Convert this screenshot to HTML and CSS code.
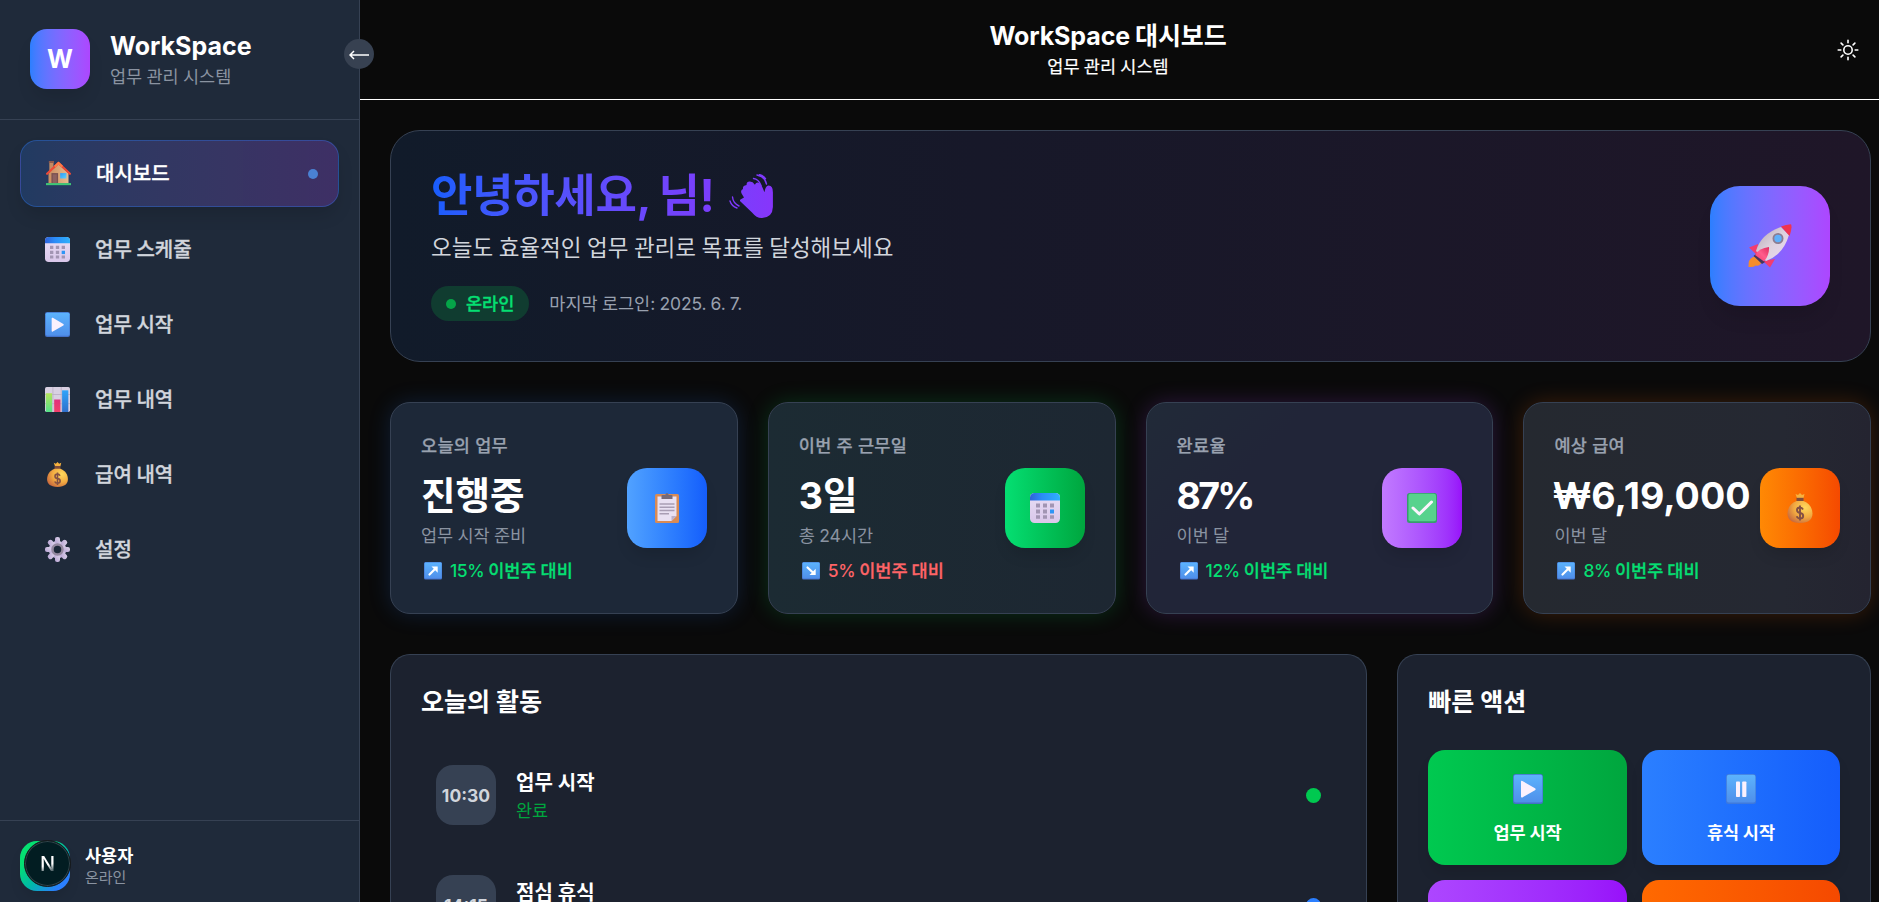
FILE: index.html
```html
<!DOCTYPE html>
<html lang="ko">
<head>
<meta charset="utf-8">
<title>WorkSpace 대시보드</title>
<link rel="stylesheet" href="styles.css">
</head>
<body>
<svg class="sprite" width="0" height="0" aria-hidden="true">
  <defs>
    <linearGradient id="gBlue" x1="0" y1="0" x2="0" y2="1"><stop offset="0" stop-color="#5cb3fd"/><stop offset="1" stop-color="#4f8fea"/></linearGradient>
    <linearGradient id="gCalTop" x1="0" y1="0" x2="1" y2="0"><stop offset="0" stop-color="#2e62d9"/><stop offset=".4" stop-color="#2b8cf8"/><stop offset="1" stop-color="#2fb0fb"/></linearGradient>
    <linearGradient id="gPaper" x1="0" y1="0" x2="0" y2="1"><stop offset="0" stop-color="#e9def5"/><stop offset="1" stop-color="#d9c7ea"/></linearGradient>
    <radialGradient id="gBag" cx=".7" cy=".3" r=".8"><stop offset="0" stop-color="#ffd95c"/><stop offset=".55" stop-color="#f2aa41"/><stop offset="1" stop-color="#c96a3e"/></radialGradient>
    <linearGradient id="gWall" x1="0" y1="0" x2="1" y2="0"><stop offset="0" stop-color="#c98d60"/><stop offset="1" stop-color="#e9bb8e"/></linearGradient>
    <linearGradient id="gWin" x1="0" y1="0" x2="1" y2="1"><stop offset="0" stop-color="#2f9bf7"/><stop offset="1" stop-color="#5cd0ff"/></linearGradient>
    <linearGradient id="gBarG" x1="0" y1="0" x2="0" y2="1"><stop offset="0" stop-color="#b4e45a"/><stop offset="1" stop-color="#55e08a"/></linearGradient>
    <linearGradient id="gBarR" x1="0" y1="0" x2="0" y2="1"><stop offset="0" stop-color="#e0307e"/><stop offset="1" stop-color="#f23f68"/></linearGradient>
    <linearGradient id="gBarB" x1="0" y1="0" x2="0" y2="1"><stop offset="0" stop-color="#31a4fa"/><stop offset="1" stop-color="#2f6fcb"/></linearGradient>
    <linearGradient id="gGear" x1="1" y1="0" x2="0" y2="1"><stop offset="0" stop-color="#ddd3ea"/><stop offset="1" stop-color="#b7a3d3"/></linearGradient>
    <linearGradient id="gHull" x1="0" y1="0" x2="1" y2="1"><stop offset="0" stop-color="#b5a6b0"/><stop offset=".5" stop-color="#ddd2de"/><stop offset="1" stop-color="#ecd9f4"/></linearGradient>
    <linearGradient id="gFin" x1="0" y1="1" x2="1" y2="0"><stop offset="0" stop-color="#f5386a"/><stop offset=".5" stop-color="#ff5d8c"/><stop offset="1" stop-color="#e02a5c"/></linearGradient>
    <linearGradient id="gWave" x1="0" y1="0" x2="1" y2="0"><stop offset="0" stop-color="#7b3dfc"/><stop offset="1" stop-color="#8735fb"/></linearGradient>
  </defs>
  <symbol id="home" viewBox="0 0 30 30">
    <path d="M4 2h5v12H4z" fill="#c48a62"/><path d="M3.400 0h6.200v2.400H3.400z" fill="#8d5a4e"/>
    <path d="M3 15 15 4l12 11v12H3z" fill="url(#gWall)"/>
    <path d="M1.300 15.300 15 2.500 28.700 15.300" fill="none" stroke="#ee4a37" stroke-width="2.600" stroke-linecap="round" stroke-linejoin="round"/>
    <path d="M10.500 6.700 15 2.500l4.500 4.200" fill="none" stroke="#ff7a45" stroke-width="2.600"/>
    <path d="M6.500 14.500h8v12h-8z" fill="#7a5050"/><path d="M8 16h5v10.500H8z" fill="#8d6160"/>
    <path d="M17 14.500h7.500v6.500H17z" fill="url(#gWin)"/><path d="M0 26.500h30V29H0z" fill="#3fc777"/>
  </symbol>
  <symbol id="calendar" viewBox="0 0 30 30">
    <rect width="30" height="30" rx="4.500" fill="url(#gPaper)"/><path d="M0 7.500V4.500A4.500 4.500 0 0 1 4.500 0h21A4.500 4.500 0 0 1 30 4.500v3z" fill="url(#gCalTop)"/>
    <g fill="#a295b3"><path d="M6 10.500h4v4H6zM13 10.500h4v4h-4zM20 10.500h4v4h-4zM6 16.500h4v4H6zM13 16.500h4v4h-4zM6 22.300h4v3.500H6zM13 22.300h4v3.500h-4zM20 22.300h4v3.500h-4z"/></g><path d="M20 16.500h4v4h-4z" fill="#2e95f5"/>
  </symbol>
  <symbol id="play" viewBox="0 0 30 30">
    <rect width="30" height="30" rx="2.500" fill="#4371c8"/><rect x=".8" y=".8" width="28.600" height="27.700" rx="2" fill="url(#gBlue)"/>
    <path d="M8 7.800v14.800q0 1.500 1.400.8L22 16.300q1.300-1 0-2L9.400 7q-1.400-.7-1.400.8z" fill="#fbf1fd"/>
  </symbol>
  <symbol id="pause" viewBox="0 0 30 30">
    <rect width="30" height="30" rx="2.500" fill="#3f79dc"/><rect x=".8" y=".8" width="28.600" height="27.700" rx="2" fill="url(#gBlue)"/>
    <rect x="10" y="7.500" width="4" height="15.500" rx=".8" fill="#fbf1fd"/><rect x="16.200" y="7.500" width="4.200" height="15.500" rx=".8" fill="#fbf1fd"/>
  </symbol>
  <symbol id="chart" viewBox="0 0 30 30">
    <rect width="30" height="30" rx="2" fill="#d9d0e2"/><path d="M9.500 0v30M19.500 0v30M0 9h30M0 20h30" stroke="#b9afc4"/>
    <path d="M1 7.500h7.500V30H1z" fill="url(#gBarG)"/><path d="M11 15h7.500v15H11z" fill="url(#gBarR)"/><path d="M20.500 4H28v26h-7.500z" fill="url(#gBarB)"/>
  </symbol>
  <symbol id="money" viewBox="0 0 30 30">
    <path d="M12 5 10.500 1l2.500 1 2-2 2 2 2.500-1L18.500 5z" fill="#f7b23e"/><path d="M11.500 4.800h7v4h-7z" fill="#7e4c3c"/>
    <path d="M11.500 8h7C24 10 27.500 15 27.500 20.500S24 30 15 30 2.500 26 2.500 20.500 6 10 11.500 8z" fill="url(#gBag)"/>
    <path d="M18 16.500q-1-2-3-2-3 0-3 2.500t3 2.900q3.200.4 3.200 3T15 25.500q-2.500 0-3.300-2.200M15 12.500v15" fill="none" stroke="#845044" stroke-width="1.900"/>
  </symbol>
  <symbol id="gear" viewBox="0 0 30 30">
    <g fill="url(#gGear)"><circle cx="15" cy="15" r="10.500"/><g id="teeth"><rect x="12" y="0" width="6" height="8" rx="2.500"/><rect x="12" y="22" width="6" height="8" rx="2.500"/><rect x="0" y="12" width="8" height="6" rx="2.500"/><rect x="22" y="12" width="8" height="6" rx="2.500"/></g><use href="#teeth" transform="rotate(45 15 15)"/></g>
    <circle cx="15" cy="15" r="6" fill="#1e2939" stroke="#94889f" stroke-width="3"/>
  </symbol>
  <symbol id="clipboard" viewBox="0 0 30 30">
    <rect x="3" y="1" width="24" height="29" rx="1.500" fill="#d98b55"/><path d="M5.500 3.500h19V23l-5 5h-14z" fill="#e9e0f2"/><path d="M24.500 23h-5v5z" fill="#bdb0c9"/>
    <path d="M9.500 6V3q0-1 1-1h2.800q.4-2 1.700-2t1.700 2h2.800q1 0 1 1v3z" fill="#776a79"/>
    <path d="M7.500 11h15M7.500 14.300h15M7.500 17.500h15M7.500 20.800h9.500" stroke="#a99db4" stroke-width="1.400"/>
  </symbol>
  <symbol id="check" viewBox="0 0 30 30">
    <rect width="30" height="30" rx="2.500" fill="#379d6e"/><rect x="1.500" y=".8" width="27.500" height="27.500" rx="2" fill="#57d28d"/>
    <path d="m6 15 6.300 6L24.500 9" fill="none" stroke="#fcf3fd" stroke-width="3" stroke-linecap="round" stroke-linejoin="round"/>
  </symbol>
  <symbol id="up" viewBox="0 0 18 18">
    <rect width="18" height="17.500" rx="1.500" fill="#4674ce"/><rect x=".6" y=".5" width="17" height="16" rx="1" fill="url(#gBlue)"/>
    <path d="M5.500 12.500 12 6" stroke="#fff" stroke-width="2.200" stroke-linecap="round"/><path d="M7.500 4.500h6.200v6.200z" fill="#fff"/>
  </symbol>
  <symbol id="down" viewBox="0 0 18 18">
    <rect width="18" height="17.500" rx="1.500" fill="#4674ce"/><rect x=".6" y=".5" width="17" height="16" rx="1" fill="url(#gBlue)"/>
    <path d="M5.500 5.500 12 11.500" stroke="#fff" stroke-width="2.200" stroke-linecap="round"/><path d="M13.700 6.800V13H7.500z" fill="#fff"/>
  </symbol>
  <symbol id="rocket" viewBox="0 0 44 44">
    <path d="M5 33q3-1 5 1l3 3q1 2-1 3.500-2 2-4.500 1-1.500 2-7 1.500Q0 35 5 33z" fill="#f58d2c"/>
    <path d="M10 20 1 23.500 9 31zM27 35 22 43.500 15 37z" fill="#f23d6f"/>
    <path d="M8 27Q13 10 33 3l8 8Q35 31 18 37z" fill="url(#gHull)"/>
    <path d="m5.500 32 3-2.500L17 38l-3 2z" fill="#45365c"/>
    <path d="M7 31q4-7 14-8 .6 8-5 14.500z" fill="url(#gFin)"/>
    <path d="M33 2.500Q38 .500 43 0.300 44.500 4 41.500 12z" fill="#f0344f"/>
    <circle cx="30" cy="14.500" r="4.600" fill="#5fb0fa" stroke="#8c7d92" stroke-width="1.800"/>
  </symbol>
  <symbol id="wave" viewBox="0 0 44 44">
    <path d="M11.500 25.500 15 23.500 12.600 19.500q-1.500-3.500 1.400-4.600-.6-3.300 3.600-4-.2-3.500 3.300-3.400 3 .1 5 3.200 1.500-3.400 4.500-1.700 2.300 1.600 5 9.300 1-6.200 4-6.700 4.600-.2 4.500 7v14.500Q43.500 44 32.500 44q-5 0-9.500-5.500l-11-10.500q-1.800-1.500-.5-2.500z" fill="url(#gWave)"/>
    <path d="M24.500 4.500q5 .5 7.500 7M28 1q8 1.500 9.500 9M3.500 23q.5 6 6.500 9M1 27q1.500 5 7 7M30.500.600q4 1 6 4" fill="none" stroke="#7f39fb" stroke-width="1.400" stroke-linecap="round"/>
  </symbol>
</svg>

<div class="layout">
  <aside class="sidebar">
    <header class="brand">
      <div class="brand-logo">W</div>
      <div>
        <div class="brand-name">WorkSpace</div>
        <div class="brand-sub">업무 관리 시스템</div>
      </div>
    </header>
    <button class="toggle" aria-label="접기"><svg width="20" height="10" viewBox="0 0 20 10"><path d="M.8 5H20M5 1 1 5l4 4" fill="none" stroke="#fff" stroke-width="1.500"/></svg></button>
    <nav class="nav">
      <a class="nav-item active"><svg><use href="#home"/></svg><span>대시보드</span><i></i></a>
      <a class="nav-item"><svg><use href="#calendar"/></svg><span>업무 스케줄</span></a>
      <a class="nav-item"><svg><use href="#play"/></svg><span>업무 시작</span></a>
      <a class="nav-item"><svg><use href="#chart"/></svg><span>업무 내역</span></a>
      <a class="nav-item"><svg><use href="#money"/></svg><span>급여 내역</span></a>
      <a class="nav-item"><svg><use href="#gear"/></svg><span>설정</span></a>
    </nav>
    <footer class="user">
      <div class="avatar"><div class="dev-badge"><span>N</span></div></div>
      <div>
        <div class="user-name">사용자</div>
        <div class="user-state">온라인</div>
      </div>
    </footer>
  </aside>

  <main class="main">
    <header class="topbar">
      <div class="topbar-text">
        <h1>WorkSpace 대시보드</h1>
        <p>업무 관리 시스템</p>
      </div>
      <svg class="sun" viewBox="0 0 24 24" fill="none" stroke="#fff" stroke-width="1.600" stroke-linecap="round"><circle cx="12" cy="12" r="4.200"/><path d="M12 2.200v2.600M12 19.200v2.600M2.200 12h2.600M19.200 12h2.600M5.100 5.100l1.800 1.800M17.100 17.100l1.800 1.800M18.900 5.100l-1.800 1.800M6.900 17.100l-1.800 1.800"/></svg>
    </header>

    <div class="content">
      <section class="hero">
        <div>
          <div class="hero-title"><h2>안녕하세요, 님!</h2><svg><use href="#wave"/></svg></div>
          <p class="hero-sub">오늘도 효율적인 업무 관리로 목표를 달성해보세요</p>
          <div class="hero-meta"><span class="pill"><i></i>온라인</span><span class="login">마지막 로그인: <span class="date">2025. 6. 7.</span></span></div>
        </div>
        <div class="hero-icon"><svg><use href="#rocket"/></svg></div>
      </section>

      <section class="stats">
        <article class="stat blue">
          <div><p class="label">오늘의 업무</p><p class="value">진행중</p><p class="note">업무 시작 준비</p><p class="trend"><svg><use href="#up"/></svg><span>15%</span>이번주 대비</p></div>
          <div class="stat-icon"><svg><use href="#clipboard"/></svg></div>
        </article>
        <article class="stat green">
          <div><p class="label">이번 주 근무일</p><p class="value">3일</p><p class="note">총 24시간</p><p class="trend fall"><svg><use href="#down"/></svg><span>5%</span>이번주 대비</p></div>
          <div class="stat-icon"><svg><use href="#calendar"/></svg></div>
        </article>
        <article class="stat purple">
          <div><p class="label">완료율</p><p class="value percent">87%</p><p class="note">이번 달</p><p class="trend"><svg><use href="#up"/></svg><span>12%</span>이번주 대비</p></div>
          <div class="stat-icon"><svg><use href="#check"/></svg></div>
        </article>
        <article class="stat orange">
          <div><p class="label">예상 급여</p><p class="value won">₩6,19,000</p><p class="note">이번 달</p><p class="trend"><svg><use href="#up"/></svg><span>8%</span>이번주 대비</p></div>
          <div class="stat-icon"><svg><use href="#money"/></svg></div>
        </article>
      </section>

      <section class="panels">
        <article class="panel">
          <h3>오늘의 활동</h3>
          <div class="activities">
            <div class="activity"><span class="time">10:30</span><div class="act-text"><p>업무 시작</p><small>완료</small></div><i class="done"></i></div>
            <div class="activity"><span class="time">14:15</span><div class="act-text"><p>점심 휴식</p></div><i class="break"></i></div>
          </div>
        </article>
        <article class="panel">
          <h3>빠른 액션</h3>
          <div class="actions">
            <button class="act green"><svg><use href="#play"/></svg>업무 시작</button>
            <button class="act blue"><svg><use href="#pause"/></svg>휴식 시작</button>
            <button class="act purple" aria-label="업무 내역"></button>
            <button class="act orange" aria-label="급여 내역"></button>
          </div>
        </article>
      </section>
    </div>
  </main>
</div>
</body>
</html>
```

FILE: styles.css
```css
* { box-sizing: border-box; }
html, body { margin: 0; height: 100%; overflow: hidden; }
body {
  background: #0a0a0a;
  color: #fff;
  font-family: "Inter", "Noto Sans CJK KR", sans-serif;
  font-size: 17.5px;
  line-height: 25px;
  word-spacing: -.035em;
}
h1, h2, h3, p { margin: 0; }
h1, h2, h3, p, span, button { word-spacing: -.035em; }
button { border: 0; font: inherit; color: inherit; padding: 0; }
i { display: block; border-radius: 50%; flex: none; }
svg { display: block; flex: none; }
.sprite { position: absolute; }

.layout { display: flex; height: 902px; overflow: hidden; }

/* Sidebar */
.sidebar {
  position: relative;
  z-index: 1;
  display: flex;
  flex-direction: column;
  flex: none;
  width: 360px;
  background: #1f2a3a;
  border-right: 1px solid #364153;
}
.brand {
  display: flex;
  align-items: center;
  gap: 20px;
  height: 120px;
  padding: 0 30px 2px;
  border-bottom: 1px solid #364153;
}
.brand-logo {
  display: grid;
  place-items: center;
  width: 60px;
  height: 60px;
  padding-top: 2px;
  border-radius: 17px;
  background: linear-gradient(90deg in oklab, #2b7fff, #ad46ff);
  box-shadow: 0 12px 18px -4px rgba(0, 0, 0, .12);
  font-size: 25px;
  font-weight: 700;
}
.brand-name { font-size: 25px; line-height: 35px; font-weight: 700; }
.brand-sub { color: #8a93a1; }
.toggle {
  position: absolute;
  top: 39px;
  right: -15px;
  display: grid;
  place-items: center;
  width: 30px;
  height: 30px;
  padding-top: 2px;
  border-radius: 50%;
  background: #374151;
}
.nav { display: flex; flex-direction: column; gap: 10px; flex: 1; padding: 20px; }
.nav-item {
  display: flex;
  align-items: center;
  gap: 25px;
  height: 65px;
  padding: 0 20px 0 25px;
  border-radius: 17px;
  color: #d1d5dc;
  font-size: 20px;
  font-weight: 500;
  -webkit-text-stroke: .35px;
}
.nav-item span { padding-top: 2px; }
.nav-item svg { width: 25px; height: 25px; }
.nav-item.active {
  height: 67px;
  border: 1px solid rgba(43, 127, 255, .34);
  background: linear-gradient(90deg in oklab, rgba(43, 127, 255, .2), rgba(173, 70, 255, .22));
  box-shadow: 0 10px 18px -3px rgba(0, 0, 0, .14);
  color: #fff;
}
.nav-item i { width: 10px; height: 10px; margin-left: auto; background: #4a81d3; }
.user {
  display: flex;
  align-items: center;
  gap: 15px;
  height: 82px;
  padding: 9px 20px 0;
  border-top: 1px solid #364153;
}
.avatar {
  position: relative;
  width: 50px;
  height: 50px;
  border-radius: 17px;
  background: linear-gradient(135deg, #05df72 25%, #00b8a8 55%, #2b7fff 85%);
  box-shadow: 0 8px 14px -3px rgba(0, 0, 0, .12);
}
.dev-badge {
  position: absolute;
  left: 4px;
  top: -1px;
  display: grid;
  place-items: center;
  width: 47px;
  height: 47px;
  border-radius: 50%;
  background: #021d22;
  border: 1px solid #17191b;
  box-shadow: inset 0 0 0 1px #31444a;
  font-size: 20px;
  font-weight: 500;
}
.dev-badge span {
  padding-top: 2px;
  background: linear-gradient(165deg, #fff 55%, #5d6e72 75%);
  background-clip: text;
  color: transparent;
}
.user-name { font-weight: 600; line-height: 23px; }
.user-state { color: #8a93a1; font-size: 15px; line-height: 21px; }

/* Main column */
.main { flex: 1; min-width: 0; }
.topbar {
  display: flex;
  align-items: center;
  height: 100px;
  padding: 0 19px 0 20px;
  border-bottom: 1px solid #fff;
}
.topbar-text { flex: 1; padding-bottom: 2px; text-align: center; }
.topbar h1 { font-size: 25px; line-height: 35px; font-weight: 700; letter-spacing: -.1px; }
.topbar p { -webkit-text-stroke: .2px; }
.sun { width: 24px; height: 24px; }
.content { display: flex; flex-direction: column; gap: 40px; padding: 30px 7.800px 0 30px; }

.hero {
  display: flex;
  align-items: center;
  justify-content: space-between;
  height: 232px;
  padding: 0 40px;
  border: 1px solid #364153;
  border-radius: 30px;
  background: linear-gradient(90deg, #111b2a, #171829 40%, #1f1628);
}
.hero-title { display: flex; align-items: center; gap: 15px; margin-bottom: 9px; }
.hero h2 {
  font-size: 45px;
  line-height: 50px;
  font-weight: 700;
  letter-spacing: -.3px;
  word-spacing: -.04em;
  background: linear-gradient(90deg in oklab, #155dfc, #7b3dfc);
  background-clip: text;
  color: transparent;
}
.hero-title svg { width: 44px; height: 44px; }
.hero-sub { font-size: 22.5px; line-height: 35px; color: #d1d5dc; margin-bottom: 21px; }
.hero-meta { display: flex; align-items: center; gap: 20px; }
.pill {
  display: flex;
  align-items: center;
  gap: 10px;
  padding: 5px 15px;
  border-radius: 20px;
  background: #103c30;
  color: #05df72;
  font-weight: 500;
  -webkit-text-stroke: .35px;
}
.pill i { width: 10px; height: 10px; background: #05a548; }
.login { color: #99a1af; }
.date { letter-spacing: -.15px; }
.hero-icon {
  display: grid;
  place-items: center;
  width: 120px;
  height: 120px;
  border-radius: 30px;
  background: linear-gradient(90deg in oklab, #2b7fff, #ad46ff);
  box-shadow: 0 16px 20px -6px rgba(0, 0, 0, .12);
}
.hero-icon svg { width: 44px; height: 44px; }

.stats { display: grid; grid-template-columns: repeat(4, minmax(0, 1fr)); gap: 30px; }
.stat {
  display: flex;
  align-items: center;
  justify-content: space-between;
  height: 212px;
  padding: 0 30px;
  border: 1px solid #364153;
  border-radius: 20px;
  white-space: nowrap;
}
.stat.blue { background: #1d2838; box-shadow: 0 0 22px rgba(43, 127, 255, .17); }
.stat.green { background: linear-gradient(90deg, #1c2b33, #1d2732); box-shadow: 0 0 22px rgba(0, 201, 80, .2); }
.stat.purple { background: linear-gradient(135deg, #212a38, #212538 30%); box-shadow: 0 0 22px rgba(173, 70, 255, .2); }
.stat.orange { background: linear-gradient(90deg, #252930, #252832 75%, #242430); box-shadow: 0 0 22px rgba(255, 105, 0, .2); }
.label { color: #99a1af; font-weight: 500; margin-bottom: 10px; letter-spacing: .3px; word-spacing: 0; -webkit-text-stroke: .25px; }
.value { padding-top: 5px; font-size: 37.5px; line-height: 45px; font-weight: 700; margin-bottom: 5px; }
.value.percent { letter-spacing: -2.800px; }
.value.won { margin-left: -2px; }
.note { color: #8a93a1; margin-bottom: 10px; }
.trend { display: flex; align-items: center; color: #05df72; font-weight: 500; word-spacing: -.035em; -webkit-text-stroke: .3px; }
.trend span { margin-right: 4px; letter-spacing: -.4px; -webkit-text-stroke: 0; }
.trend.fall { color: #ff6467; }
.trend svg { width: 18px; height: 18px; margin: 0 8px 0 3px; }
.stat-icon {
  display: grid;
  place-items: center;
  flex: none;
  width: 80px;
  height: 80px;
  border-radius: 20px;
  box-shadow: 0 10px 16px -4px rgba(0, 0, 0, .14);
}
.stat-icon svg { width: 30px; height: 30px; }
.blue .stat-icon { background: linear-gradient(90deg in oklab, #51a2ff, #155dfc); }
.green .stat-icon { background: linear-gradient(90deg in oklab, #05df72, #00a63e); }
.purple .stat-icon { background: linear-gradient(90deg in oklab, #c27aff, #9810fa); }
.orange .stat-icon { background: linear-gradient(90deg in oklab, #ff8904, #f54900); }

.panels { display: grid; grid-template-columns: 977.300px minmax(0, 1fr); gap: 30px; }
.panel {
  height: 248px;
  padding: 30px;
  border: 1px solid #364153;
  border-bottom: 0;
  border-radius: 20px 20px 0 0;
  background: #1c222f;
  overflow: hidden;
}
.panel h3 { font-size: 25px; line-height: 35px; font-weight: 700; margin-bottom: 30px; word-spacing: 0; }
.activities { display: grid; gap: 20px; }
.activity { display: flex; align-items: center; gap: 20px; height: 90px; padding: 15px; }
.time {
  display: grid;
  place-items: center;
  width: 60px;
  height: 60px;
  border-radius: 17px;
  background: #364153;
  color: #d1d5dc;
  font-weight: 700;
}
.act-text { flex: 1; height: 55px; }
.act-text p { font-size: 20px; line-height: 30px; font-weight: 600; word-spacing: 0; }
.act-text small { display: block; font-size: 17.5px; color: #00a63e; }
.activity i { width: 15px; height: 15px; background: #00c950; }
.activity i.break { background: #2b7fff; }
.actions { display: grid; grid-template-columns: 1fr 1fr; gap: 15px; }
.act {
  display: flex;
  flex-direction: column;
  align-items: center;
  gap: 16px;
  height: 115px;
  padding-top: 24px;
  border-radius: 17px;
  box-shadow: 0 10px 16px -4px rgba(0, 0, 0, .14);
  font-weight: 600;
}
.act svg { width: 30px; height: 30px; }
.act.green { background: linear-gradient(90deg in oklab, #00c950, #00a63e); }
.act.blue { background: linear-gradient(90deg in oklab, #2b7fff, #155dfc); }
.act.purple { background: linear-gradient(90deg in oklab, #ad46ff, #9810fa); }
.act.orange { background: linear-gradient(90deg in oklab, #ff6900, #f54900); }
```
